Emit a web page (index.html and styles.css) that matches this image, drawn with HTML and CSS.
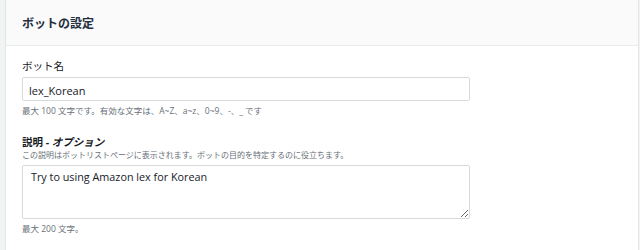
FILE: index.html
```html
<!DOCTYPE html>
<html lang="ja">
<head>
  <meta charset="UTF-8" />
  <title>ボットの設定</title>
  <link rel="stylesheet" href="styles.css">
</head>
<body>
  <div class="panel">
    <div class="panel-header">
      <h2>ボットの設定</h2>
    </div>
    <div class="panel-body">
      <div class="field">
        <label class="field-label" for="botName">ボット名</label>
        <input type="text" id="botName" class="text-input" value="lex_Korean">
        <p class="hint">最大 100 文字です。有効な文字は、A~Z、a~z、0~9、-、_ です</p>
      </div>
      <div class="field">
        <label class="field-label strong" for="botDesc">説明 - <i>オプション</i></label>
        <p class="desc">この説明はボットリストページに表示されます。ボットの目的を特定するのに役立ちます。</p>
        <textarea id="botDesc" class="text-area">Try to using Amazon lex for Korean</textarea>
        <p class="hint">最大 200 文字。</p>
      </div>
    </div>
  </div>
</body>
</html>
```

FILE: styles.css
```css
body {
  margin: 0;
  padding: 0 1px 0 5px;
  background: #f2f3f3;
  font-family: "Open Sans", "Noto Sans CJK JP", sans-serif;
  color: #16191f;
  height: 250px;
  overflow: hidden;
}

.panel {
  background: #ffffff;
  border-left: 1px solid #e3e6e6;
  border-right: 1px solid #e3e6e6;
  height: 100%;
}

.panel-header {
  background: #fafafa;
  border-bottom: 1px solid #eaeded;
  height: 45px;
  padding-left: 16px;
  display: flex;
  align-items: center;
}

.panel-header h2 {
  margin: 0;
  font-size: 12px;
  font-weight: 700;
  color: #232f3e;
}

.panel-body {
  padding: 13px 16px 0 16px;
}

.field {
  margin-bottom: 18px;
}

.field-label {
  display: block;
  font-size: 10.5px;
  font-weight: 400;
  line-height: 14px;
  margin-bottom: 4px;
  color: #16191f;
}

.field-label.strong {
  font-weight: 700;
  margin-bottom: 0;
}

.field-label i {
  font-style: italic;
}

.text-input,
.text-area {
  display: block;
  box-sizing: border-box;
  width: 448px;
  border: 1px solid #d5dbdb;
  border-radius: 2px;
  padding: 0 6px;
  font-family: "Open Sans", "Noto Sans CJK JP", sans-serif;
  font-size: 11px;
  color: #16191f;
  margin: 0;
}

.text-input {
  height: 24px;
  padding-top: 2px;
}

.text-area {
  height: 54px;
  padding: 4px 8px 0 8px;
  line-height: 14px;
  font-size: 10.8px;
  resize: vertical;
}

.hint,
.desc {
  margin: 0;
  font-size: 8.5px;
  line-height: 12px;
  color: #687078;
}

.hint {
  margin-top: 4px;
}

.desc {
  font-size: 8px;
  line-height: 11px;
  margin-bottom: 5px;
}
```
